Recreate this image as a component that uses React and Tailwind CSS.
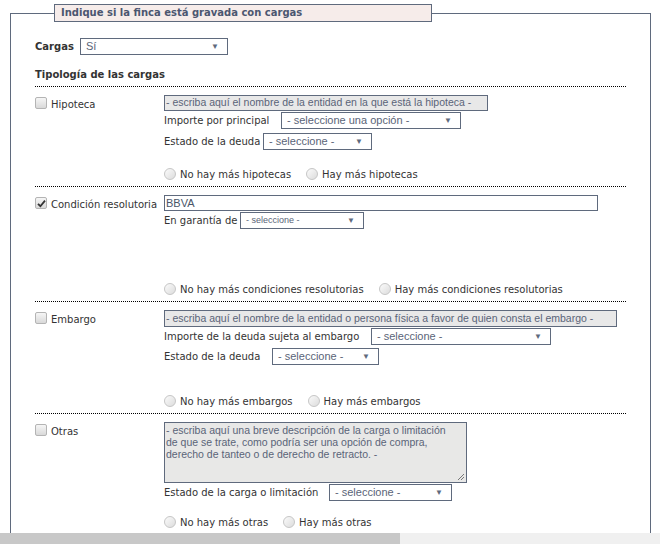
import React from 'react'

const sans = "font-['DejaVu_Sans',Verdana,sans-serif]"
const arial = "font-['Liberation_Sans',Arial,sans-serif]"

const Check = ({ checked }) => (
  <span className="w-[12px] h-[12px] shrink-0 rounded-[2px] border border-[#b4b4b4] bg-gradient-to-b from-[#f6f6f6] to-[#d9d9d9] flex items-center justify-center">
    {checked && (
      <svg width="9" height="9" viewBox="0 0 9 9">
        <path d="M1 4.8 L3.4 7.2 L8 1.6" stroke="#333" strokeWidth="1.8" fill="none" />
      </svg>
    )}
  </span>
)

const Radio = ({ label }) => (
  <span className="flex items-center gap-[4px]">
    <span className="w-[12px] h-[12px] mb-[3px] rounded-full border border-[#c6c6c6] bg-gradient-to-br from-[#fbfbfb] to-[#dcdcdc]" />
    <span className="text-[10px] text-[#333] leading-[12px]">{label}</span>
  </span>
)

const Select = ({ w, text, small }) => (
  <div
    className={`${w} h-[17px] border border-[#5f6a7d] bg-white flex items-center justify-between pl-[5px] pr-[8px] ${arial} text-[#5a6478]`}
  >
    <span className={small ? 'text-[9px]' : 'text-[11px]'}>{text}</span>
    <span className="text-[8px] text-[#5f6a7d]">▼</span>
  </div>
)

const Field = ({ label, labelW, w, text, small, mt = 'mt-[1px]' }) => (
  <div className={`flex items-center ${mt}`}>
    <span className={`${labelW} text-[10px] text-[#333] leading-[12px] pt-[1px]`}>{label}</span>
    <Select w={w} text={text} small={small} />
  </div>
)

const Section = ({ label, checked, children, last }) => (
  <div
    className={`grid grid-cols-[129px_1fr] pt-[8px] ${last ? '' : 'pb-[4px] border-b border-dotted border-black'}`}
  >
    <div className="flex items-center gap-[4px] h-[14px] mt-[1px]">
      <Check checked={checked} />
      <span className="text-[10px] text-[#333] leading-[12px] pt-[4px]">{label}</span>
    </div>
    <div className="flex flex-col">{children}</div>
  </div>
)

const TextBox = ({ w, text, white }) => (
  <div
    className={`${w} h-[16px] border border-[#5f6a7d] ${white ? 'bg-white text-[#4a5568] text-[11px]' : 'bg-[#e8e8e8] text-[#5a6478] text-[10.5px]'} ${arial} flex items-center px-[1px] whitespace-nowrap overflow-hidden`}
  >
    {text}
  </div>
)

const Radios = ({ mt, a, b, gap }) => (
  <div className={`flex items-center h-[14px] ${mt} ${gap}`}>
    <Radio label={a} />
    <Radio label={b} />
  </div>
)

export default function App() {
  return (
    <div className={`w-[660px] h-[544px] bg-white flex flex-col overflow-hidden ${sans}`}>
      <div className="flex-1 overflow-hidden pt-[4px] pl-[10px]">
        <fieldset className="w-[641px] border border-[#5f6a7d] pl-[24px] pr-[24px] m-0 pb-[40px]">
          <legend className="ml-[19px] h-[18px] w-[378px] border border-[#5f6a7d] bg-[#f6ecea] pl-[6px] text-[10px] font-bold text-[#4b5670] leading-[16px]">
            Indique si la finca está gravada con cargas
          </legend>

          <div className="flex items-center mt-[16px]">
            <span className="w-[45px] text-[10px] font-bold text-[#333] leading-[12px]">Cargas</span>
            <Select w="w-[148px]" text="Sí" />
          </div>

          <div className="mt-[12px] pb-[3px] border-b border-dotted border-black text-[10px] font-bold text-[#333] leading-[16px]">
            Tipología de las cargas
          </div>

          <Section label="Hipoteca">
            <TextBox
              w="w-[324px]"
              text="- escriba aquí el nombre de la entidad en la que está la hipoteca -"
            />
            <Field
              label="Importe por principal"
              labelW="w-[117px]"
              w="w-[180px]"
              text="- seleccione una opción -"
            />
            <Field
              label="Estado de la deuda"
              labelW="w-[99px]"
              w="w-[109px]"
              text="- seleccione -"
              mt="mt-[4px]"
            />
            <Radios
              mt="mt-[18px]"
              gap="gap-[15px]"
              a="No hay más hipotecas"
              b="Hay más hipotecas"
            />
          </Section>

          <Section label="Condición resolutoria" checked>
            <TextBox w="w-[434px]" text="BBVA" white />
            <Field
              label="En garantía de"
              labelW="w-[76px]"
              w="w-[124px]"
              text="- seleccione -"
              small
            />
            <Radios
              mt="mt-[54px]"
              gap="gap-[15px]"
              a="No hay más condiciones resolutorias"
              b="Hay más condiciones resolutorias"
            />
          </Section>

          <Section label="Embargo">
            <TextBox
              w="w-[453px] h-[17px]"
              text="- escriba aquí el nombre de la entidad o persona física a favor de quien consta el embargo -"
            />
            <Field
              label="Importe de la deuda sujeta al embargo"
              labelW="w-[207px]"
              w="w-[180px]"
              text="- seleccione -"
            />
            <Field
              label="Estado de la deuda"
              labelW="w-[108px]"
              w="w-[107px]"
              text="- seleccione -"
              mt="mt-[3px]"
            />
            <Radios
              mt="mt-[30px]"
              gap="gap-[15px]"
              a="No hay más embargos"
              b="Hay más embargos"
            />
          </Section>

          <Section label="Otras" last>
            <div
              className={`relative w-[303px] h-[61px] border border-[#5f6a7d] bg-[#e8e8e7] ${arial} text-[10.5px] leading-[12px] text-[#5a6478] px-[1px] pt-[1px]`}
            >
              - escriba aquí una breve descripción de la carga o limitación
              <br />
              de que se trate, como podría ser una opción de compra,
              <br />
              derecho de tanteo o de derecho de retracto. -
              <svg className="absolute right-[1px] bottom-[1px]" width="8" height="8" viewBox="0 0 8 8">
                <path d="M7 1 L1 7 M7 4 L4 7" stroke="#777" strokeWidth="1" />
              </svg>
            </div>
            <Field
              label="Estado de la carga o limitación"
              labelW="w-[165px]"
              w="w-[123px]"
              text="- seleccione -"
            />
            <Radios
              mt="mt-[15px]"
              gap="gap-[15px]"
              a="No hay más otras"
              b="Hay más otras"
            />
          </Section>
        </fieldset>
      </div>
      <div className="h-[11px] bg-[#f0f0f0] flex">
        <div className="w-[400px] h-full bg-[#c8c8c8]" />
      </div>
    </div>
  )
}
